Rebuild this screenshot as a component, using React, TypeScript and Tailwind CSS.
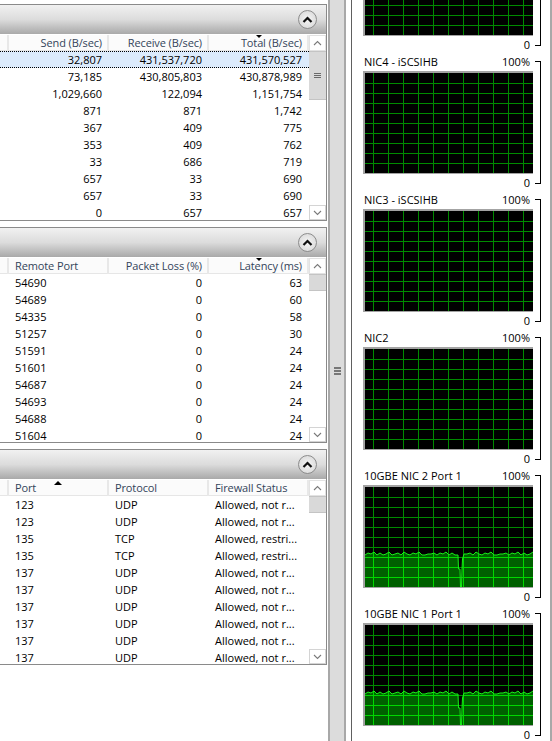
import React from "react";

type Col = { label: string; right?: boolean };

const Up = ({ className }: { className?: string }) => (
  <svg width="9" height="6" viewBox="0 0 9 6" className={className} fill="none">
    <path d="M1 5 L4.5 1.5 L8 5" stroke="#7a7a7a" strokeWidth="1.1" />
  </svg>
);
const Down = () => (
  <svg width="9" height="6" viewBox="0 0 9 6" fill="none">
    <path d="M1 1 L4.5 4.5 L8 1" stroke="#7a7a7a" strokeWidth="1.1" />
  </svg>
);

function Scrollbar({ thumb, grip }: { thumb: number; grip?: boolean }) {
  return (
    <div className="w-[17px] flex flex-col justify-between bg-white">
      <div className="flex flex-col">
        <div className="h-[16px] flex items-center justify-center border border-[#e2e2e2]">
          <Up />
        </div>
        <div
          className="bg-[#d9d9d9] border-y border-[#c4c4c4] flex flex-col items-center justify-center gap-[1px]"
          style={{ height: thumb }}
        >
          {grip && (
            <>
              <div className="w-[7px] h-[1px] bg-[#6a6a6a]" />
              <div className="w-[7px] h-[1px] bg-[#6a6a6a]" />
              <div className="w-[7px] h-[1px] bg-[#6a6a6a]" />
            </>
          )}
        </div>
      </div>
      <div className="h-[15px] flex items-center justify-center border border-[#d4d4d4]">
        <Down />
      </div>
    </div>
  );
}

function Section({
  cols,
  rows,
  thumb,
  grip,
  height,
  sort,
  selected,
}: {
  cols: Col[];
  rows: string[][];
  thumb: number;
  grip?: boolean;
  height: string;
  sort: "down" | "up";
  selected?: boolean;
}) {
  return (
    <div className={`w-[327px] border-y border-r border-[#8a8a8a] flex flex-col overflow-hidden ${height}`}>
      <div className="h-[29px] shrink-0 flex items-center justify-end pr-[9px] bg-linear-to-b from-[#f1f1f1] via-[#dcdcdc] to-[#a9a9a9]">
        <div className="w-[19px] h-[19px] rounded-full border border-[#8c8c8c] bg-radial from-[#f6f6f6] to-[#d4d4d4] flex items-center justify-center">
          <svg width="11" height="8" viewBox="0 0 11 8" fill="none">
            <path d="M1.5 6 L5.5 2 L9.5 6" stroke="#111" strokeWidth="2.2" />
          </svg>
        </div>
      </div>
      <div className="flex flex-1 min-h-0 pt-[1px]">
        <div className="w-[309px] flex flex-col overflow-hidden">
          <div className="relative grid grid-cols-[9px_100px_100px_100px] h-[16px] shrink-0 text-[#33445a] tracking-[-0.12px] bg-[#fbfbfb] border-b border-[#e6e6e6]">
            <div className="border-r-2 border-[#e8e8e8]" />
            {cols.map((c) => (
              <div
                key={c.label}
                className={`border-r-2 border-[#e8e8e8] leading-[16px] whitespace-nowrap ${
                  c.right ? "text-right pr-[5px]" : "pl-[6px]"
                }`}
              >
                {c.label}
              </div>
            ))}
            {sort === "down" ? (
              <div className="absolute top-[-1px] left-[255px] w-0 h-0 border-x-[4px] border-x-transparent border-t-[4px] border-t-black" />
            ) : (
              <div className="absolute top-[1px] left-[54px] w-0 h-0 border-x-[4px] border-x-transparent border-b-[4px] border-b-black" />
            )}
          </div>
          {rows.map((r, i) => (
            <div
              key={i}
              className={`grid grid-cols-[9px_100px_100px_100px] h-[17px] shrink-0 text-black ${
                selected && i === 0 ? "bg-[#dcebfc] border-y border-dotted border-black" : ""
              }`}
            >
              <div />
              {r.map((v, j) => (
                <div
                  key={j}
                  className={`whitespace-nowrap ${
                    selected && i === 0 ? "leading-[15px]" : "leading-[17px]"
                  } ${cols[j].right ? "text-right pr-[7px]" : "pl-[6px]"}`}
                >
                  {v}
                </div>
              ))}
            </div>
          ))}
        </div>
        <Scrollbar thumb={thumb} grip={grip} />
      </div>
    </div>
  );
}

const zig = [3, 1, 2, 0, 3, 1, 3, 2, 0, 3, 2, 1, 3, 0, 2, 3, 1, 2, 0, 3, 3, 2, 2, 1];

function Graph({ id, load, base }: { id: string; load: boolean; base: number }) {
  const vs = Array.from({ length: 11 }, (_, i) => 8 + i * 15);
  const hs = Array.from({ length: 9 }, (_, i) => 10 + i * 10);
  const grid = [
    ...vs.map((x) => `M${x + 0.5} 0V100`),
    ...hs.map((y) => `M0 ${y + 0.5}H168`),
  ].join("");
  const pts: [number, number][] = [];
  if (load) {
    for (let x = 0; x <= 90; x += 3) pts.push([x, base + zig[(x / 3) % zig.length] - 3]);
    pts.push([93, base], [93.5, base + 14], [95, base + 14], [95.5, 100], [96.5, 100], [97, base + 14], [97.5, base + 4], [99, base - 1]);
    for (let x = 102; x <= 168; x += 3) pts.push([x, base + zig[((x / 3) | 0) % zig.length] - 3]);
  }
  const line = pts.map((p) => p.join(",")).join(" ");
  return (
    <div className="w-[170px] h-[103px] border-t-2 border-l-2 border-b border-[#a3a3a3] bg-black">
      <svg width="168" height="100" viewBox="0 0 168 100" className="block">
        <path d={grid} stroke="#008a00" strokeWidth="1" fill="none" />
        {load && (
          <>
            <clipPath id={id}>
              <polygon points={`0,100 ${line} 168,100`} />
            </clipPath>
            <polygon points={`0,100 ${line} 168,100`} fill="#006000" />
            <path d={grid} stroke="#00d800" strokeWidth="1" fill="none" clipPath={`url(#${id})`} />
            <polyline points={line} fill="none" stroke="#18f018" strokeWidth="1" />
          </>
        )}
      </svg>
    </div>
  );
}

function Block({ name, id, load, base }: { name?: string; id: string; load?: boolean; base?: number }) {
  return (
    <div className="h-[138px] shrink-0 flex items-start">
      <div className="w-[170px] flex flex-col">
        <div className="h-[17px] flex justify-between items-start pl-[1px] pr-[3px] text-black leading-[16px] whitespace-nowrap">
          {name && (
            <>
              <span>{name}</span>
              <span>100%</span>
            </>
          )}
        </div>
        <Graph id={id} load={!!load} base={base ?? 0} />
        <div className="h-[18px] text-right pr-[3px] leading-[18px] text-black">0</div>
      </div>
      <div className="ml-[2px] mt-[7px] w-[6px] h-[123px] border-y border-r border-black" />
    </div>
  );
}

const s1 = [
  ["32,807", "431,537,720", "431,570,527"],
  ["73,185", "430,805,803", "430,878,989"],
  ["1,029,660", "122,094", "1,151,754"],
  ["871", "871", "1,742"],
  ["367", "409", "775"],
  ["353", "409", "762"],
  ["33", "686", "719"],
  ["657", "33", "690"],
  ["657", "33", "690"],
  ["0", "657", "657"],
];
const s2 = [
  ["54690", "0", "63"],
  ["54689", "0", "60"],
  ["54335", "0", "58"],
  ["51257", "0", "30"],
  ["51591", "0", "24"],
  ["51601", "0", "24"],
  ["54687", "0", "24"],
  ["54693", "0", "24"],
  ["54688", "0", "24"],
  ["51604", "0", "24"],
];
const nr = "Allowed, not r...";
const re = "Allowed, restri...";
const s3 = [
  ["123", "UDP", nr],
  ["123", "UDP", nr],
  ["135", "TCP", re],
  ["135", "TCP", re],
  ["137", "UDP", nr],
  ["137", "UDP", nr],
  ["137", "UDP", nr],
  ["137", "UDP", nr],
  ["137", "UDP", nr],
  ["137", "UDP", nr],
];

export default function App() {
  return (
    <div className="w-[552px] h-[741px] overflow-hidden flex bg-white font-['Open_Sans',sans-serif] text-[11px]">
      <div className="w-[328px] shrink-0 flex flex-col pt-[4px] gap-[6px]">
        <Section
          height="h-[217px]"
          cols={[
            { label: "Send (B/sec)", right: true },
            { label: "Receive (B/sec)", right: true },
            { label: "Total (B/sec)", right: true },
          ]}
          rows={s1}
          thumb={49}
          grip
          sort="down"
          selected
        />
        <Section
          height="h-[216px]"
          cols={[
            { label: "Remote Port" },
            { label: "Packet Loss (%)", right: true },
            { label: "Latency (ms)", right: true },
          ]}
          rows={s2}
          thumb={17}
          sort="down"
        />
        <Section
          height="h-[216px]"
          cols={[{ label: "Port" }, { label: "Protocol" }, { label: "Firewall Status" }]}
          rows={s3}
          thumb={17}
          sort="up"
        />
      </div>
      <div className="w-[18px] shrink-0 bg-[#dcdcdc] border-x-2 border-[#a8a8a8] flex flex-col items-center justify-center gap-[1px]">
        <div className="w-[7px] h-[2px] bg-[#777]" />
        <div className="w-[7px] h-[2px] bg-[#777]" />
        <div className="w-[7px] h-[2px] bg-[#777]" />
      </div>
      <div className="flex-1 flex pl-[5px] border-r-2 border-[#a8a8a8]">
        <div className="flex-1 border-l border-[#606060] pl-[11px] flex flex-col mt-[-84px]">
          <Block id="g0" />
          <Block name="NIC4 - iSCSIHB" id="g1" />
          <Block name="NIC3 - iSCSIHB" id="g2" />
          <Block name="NIC2" id="g3" />
          <Block name="10GBE NIC 2 Port 1" id="g4" load base={68} />
          <Block name="10GBE NIC 1 Port 1" id="g5" load base={69} />
        </div>
      </div>
    </div>
  );
}
